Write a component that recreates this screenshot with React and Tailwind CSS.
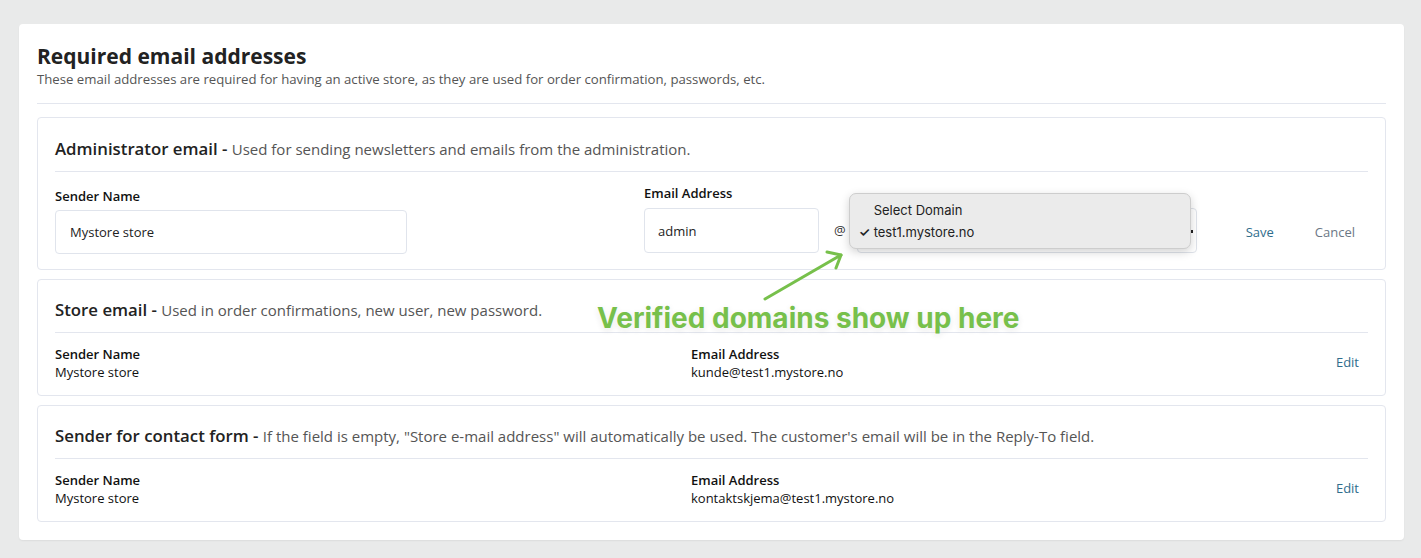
import React from 'react';

const font = { fontFamily: '"Open Sans", "Noto Sans", sans-serif' };

const SectionHeading = ({ title, text }) => (
  <div className="h-[35px] pb-[10px] border-b border-[#e3e6ee] whitespace-nowrap flex items-baseline">
    <span className="text-[16.8px] leading-[24px] font-semibold text-[#222]">{title} -&nbsp;</span>
    <span className="text-[15px] leading-[24px] text-[#555]">{text}</span>
  </div>
);

const InfoRow = ({ name, email }) => (
  <div className="flex items-center pt-[12px]">
    <div className="w-[636px] text-[13px] leading-[18px] text-[#111]">
      <div className="font-semibold">Sender Name</div>
      <div>{name}</div>
    </div>
    <div className="flex-1 text-[13px] leading-[18px] text-[#111]">
      <div className="font-semibold">Email Address</div>
      <div>{email}</div>
    </div>
    <button className="mr-[9px] text-[13px] text-[#2f6d8c]">Edit</button>
  </div>
);

const App = () => {
  return (
    <div className="min-h-[558px] bg-[#e9eaea] pt-[24px] pl-[19px] pr-[17px] pb-[18px]" style={font}>
      <div className="bg-white rounded-[4px] shadow-[0_1px_2px_rgba(0,0,0,0.06)] px-[18px] pt-[18px] pb-[18px]">
        <h1 className="text-[21px] leading-[28px] font-bold text-[#222]">Required email addresses</h1>
        <p className="text-[13.2px] leading-[18px] text-[#555]">
          These email addresses are required for having an active store, as they are used for order confirmation, passwords, etc.
        </p>
        <div className="mt-[15px] border-t border-[#e3e6ee]" />

        <div className="relative mt-[13px] flex flex-col gap-[9px]">
          {/* Administrator email */}
          <div className="border border-[#e3e6ee] rounded-[4px] px-[17px] pt-[19px] pb-[15px]">
            <SectionHeading title="Administrator email" text="Used for sending newsletters and emails from the administration." />
            <div className="flex items-start pt-[15px]">
              <div className="w-[589px]">
                <div className="text-[13px] leading-[18px] font-semibold text-[#111] mb-[5px]">Sender Name</div>
                <input
                  readOnly
                  value="Mystore store"
                  className="w-[352px] h-[44px] border border-[#e0e4ec] rounded-[4px] px-[14px] text-[13px] text-[#222] outline-none"
                />
              </div>
              <div className="-mt-[3px]">
                <div className="text-[13px] leading-[18px] font-semibold text-[#111] mb-[6px]">Email Address</div>
                <div className="flex items-center">
                  <input
                    readOnly
                    value="admin"
                    className="w-[175px] h-[45px] border border-[#e0e4ec] rounded-[4px] px-[13px] text-[13px] text-[#222] outline-none"
                  />
                  <span className="ml-[15px] mr-[11px] text-[13px] text-[#333]">@</span>
                  <div className="relative w-[340px] h-[45px] border border-[#dfe3ea] rounded-[4px] bg-white">
                    <span className="absolute right-[3px] top-[21px] w-[2px] h-[3px] bg-[#222]" />
                    <div className="absolute left-[-9px] top-[-16px] w-[342px] h-[56px] rounded-[7px] bg-[#ebebeb] border border-[#cdcdcd] shadow-[0_3px_10px_rgba(0,0,0,0.18)] pt-[5px] text-[13px] leading-[22px] text-[#222]" style={{ fontFamily: 'Inter, "Liberation Sans", sans-serif' }}>
                      <div className="pl-[24px]">Select Domain</div>
                      <div className="pl-[9px]"><span className="inline-block w-[15px] font-semibold">✓</span>test1.mystore.no</div>
                    </div>
                  </div>
                  <button className="ml-[49px] mt-[5px] text-[13px] text-[#2f6d8c]">Save</button>
                  <button className="ml-[41px] mt-[5px] text-[13px] text-[#6b7785]">Cancel</button>
                </div>
              </div>
            </div>
          </div>

          {/* Store email */}
          <div className="border border-[#e3e6ee] rounded-[4px] px-[17px] pt-[18px] pb-[14px]">
            <SectionHeading title="Store email" text="Used in order confirmations, new user, new password." />
            <InfoRow name="Mystore store" email="kunde@test1.mystore.no" />
          </div>

          {/* Contact form */}
          <div className="border border-[#e3e6ee] rounded-[4px] px-[17px] pt-[18px] pb-[14px]">
            <SectionHeading
              title="Sender for contact form"
              text={'If the field is empty, "Store e-mail address" will automatically be used. The customer\'s email will be in the Reply-To field.'}
            />
            <InfoRow name="Mystore store" email="kontaktskjema@test1.mystore.no" />
          </div>

          {/* annotation */}
          <svg className="absolute left-[708px] top-[126px]" width="100" height="62" viewBox="0 0 100 62">
            <g stroke="#77c04b" strokeWidth="3" strokeLinecap="round" strokeLinejoin="round" fill="none">
              <line x1="20" y1="56" x2="96" y2="12" />
              <polyline points="82,9 96,12 91,25" />
            </g>
          </svg>
          <div
            className="absolute left-[560px] top-[185px] text-[28px] leading-[32px] font-bold text-[#77c04b] [text-shadow:0_0_6px_#fff,0_2px_6px_rgba(0,0,0,0.12)]"
            style={{ fontFamily: 'Inter, "Liberation Sans", sans-serif' }}
          >
            Verified domains show up here
          </div>
        </div>
      </div>
    </div>
  );
};

export default App;
